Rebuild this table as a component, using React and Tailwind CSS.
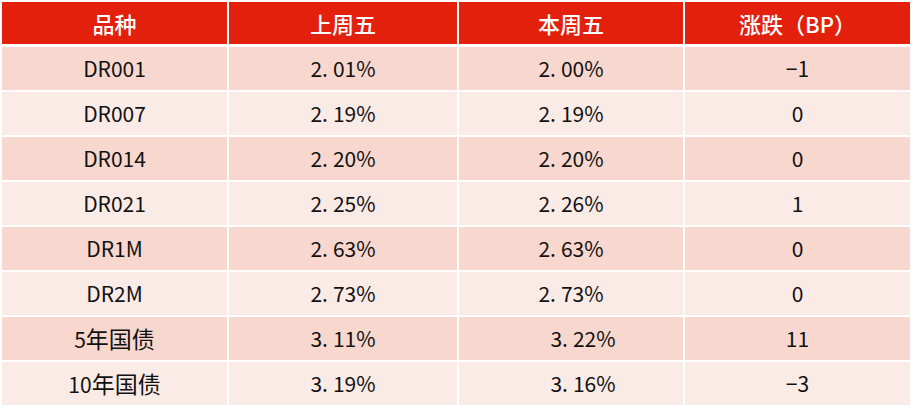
import React from "react";

const rows = [
  ["DR001", "2.01%", "2.00%", "-1"],
  ["DR007", "2.19%", "2.19%", "0"],
  ["DR014", "2.20%", "2.20%", "0"],
  ["DR021", "2.25%", "2.26%", "1"],
  ["DR1M", "2.63%", "2.63%", "0"],
  ["DR2M", "2.73%", "2.73%", "0"],
  ["5年国债", "3.11%", "3.22%", "11"],
  ["10年国债", "3.19%", "3.16%", "-3"],
];

// the source font renders the decimal point wide, so pad it a little
function Pct({ value }) {
  const [a, b] = value.split(".");
  return (
    <span>
      {a}.<span className="ml-[5px]">{b}</span>
    </span>
  );
}

// CJK glyphs in the source are a touch larger than the digits
function Name({ text }) {
  const m = text.match(/^(\d+)(.+)$/);
  if (!m || /^DR/.test(text)) return <span>{text}</span>;
  return (
    <span>
      {m[1]}
      <span className="text-[23px]">{m[2]}</span>
    </span>
  );
}

export default function App() {
  return (
    <div
      className="min-h-screen bg-white pt-[2px] pl-[2px]"
      style={{ fontFamily: '"Noto Sans CJK SC", "Noto Sans", sans-serif' }}
    >
      <div className="grid w-[908px] grid-cols-[225px_228px_224px_225px] gap-x-[2px]">
        {["品种", "上周五", "本周五", "涨跌（BP）"].map((h) => (
          <div
            key={h}
            className="flex h-[42px] items-center justify-center bg-[#e2200c] text-[22px] font-medium text-white"
          >
            {h}
          </div>
        ))}
      </div>

      <div className="mt-[3px] grid w-[908px] grid-cols-[225px_228px_224px_225px] gap-[2px]">
        {rows.map((r, i) => {
          const bg = i % 2 === 0 ? "bg-[#f8d8ce]" : "bg-[#fbebe7]";
          const shifted = i >= 6;
          return (
            <React.Fragment key={r[0]}>
              <div className={`flex h-[43px] items-center justify-center text-[21px] text-[#111] ${bg}`}>
                <Name text={r[0]} />
              </div>
              <div className={`flex h-[43px] items-center justify-center text-[21px] text-[#111] ${bg}`}>
                <Pct value={r[1]} />
              </div>
              <div
                className={`flex h-[43px] items-center justify-center text-[21px] text-[#111] ${bg} ${
                  shifted ? "pl-[24px]" : ""
                }`}
              >
                <Pct value={r[2]} />
              </div>
              <div className={`flex h-[43px] items-center justify-center text-[21px] text-[#111] ${bg}`}>
                {r[3].replace("-", "−")}
              </div>
            </React.Fragment>
          );
        })}
      </div>
    </div>
  );
}
